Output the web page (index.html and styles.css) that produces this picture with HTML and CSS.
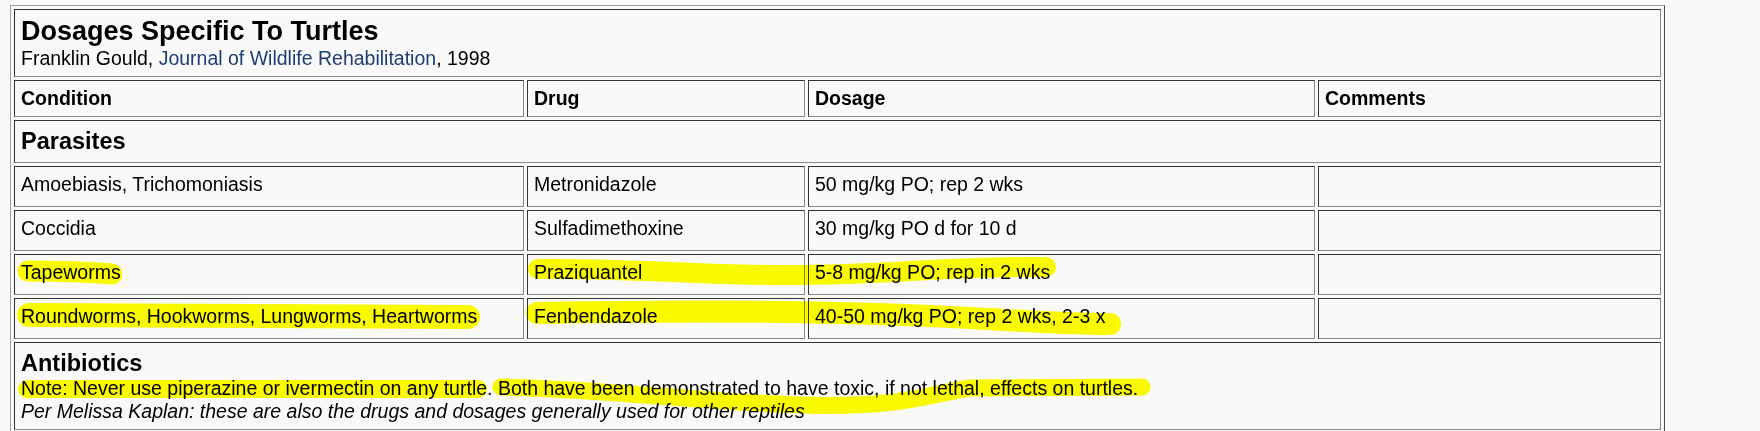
FILE: index.html
```html
<!DOCTYPE html>
<html>
<head>
<meta charset="utf-8">
<title>Dosages Specific To Turtles</title>
<link rel="stylesheet" href="styles.css">
</head>
<body>
<div class="page">
  <table class="dosage">
    <colgroup>
      <col class="c-cond">
      <col class="c-drug">
      <col class="c-dose">
      <col class="c-comm">
    </colgroup>
    <tr>
      <td colspan="4" class="title-cell">
        <div class="title">Dosages Specific To Turtles</div>
        <div class="source">Franklin Gould, <span class="journal">Journal of Wildlife Rehabilitation</span>, 1998</div>
      </td>
    </tr>
    <tr class="head">
      <th>Condition</th><th>Drug</th><th>Dosage</th><th>Comments</th>
    </tr>
    <tr class="section">
      <td colspan="4">Parasites</td>
    </tr>
    <tr class="data">
      <td>Amoebiasis, Trichomoniasis</td><td>Metronidazole</td><td>50 mg/kg PO; rep 2 wks</td><td></td>
    </tr>
    <tr class="data">
      <td>Coccidia</td><td>Sulfadimethoxine</td><td>30 mg/kg PO d for 10 d</td><td></td>
    </tr>
    <tr class="data">
      <td>Tapeworms</td><td>Praziquantel</td><td>5-8 mg/kg PO; rep in 2 wks</td><td></td>
    </tr>
    <tr class="data">
      <td>Roundworms, Hookworms, Lungworms, Heartworms</td><td>Fenbendazole</td><td>40-50 mg/kg PO; rep 2 wks, 2-3 x</td><td></td>
    </tr>
    <tr class="section notes">
      <td colspan="4">
        <div class="sec-title">Antibiotics</div>
        <div class="note">Note: Never use piperazine or ivermectin on any turtle. Both have been demonstrated to have toxic, if not lethal, effects on turtles.</div>
        <div class="kaplan">Per Melissa Kaplan: these are also the drugs and dosages generally used for other reptiles</div>
      </td>
    </tr>
  </table>
  <svg class="marker" width="1760" height="431" viewBox="0 0 1760 431" aria-hidden="true">
    <g fill="none" stroke="#ffff00" stroke-linecap="round" stroke-linejoin="round">
      <path d="M 28 271 C 60 271, 90 272, 112 274" stroke-width="21"/>
      <path d="M 538 269 C 640 268, 700 276, 800 275 S 950 266, 1046 267" stroke-width="20"/>
      <path d="M 29 315 C 200 315, 350 316, 468 317" stroke-width="24"/>
      <path d="M 537 313 C 700 310, 850 312, 950 317 S 1060 324, 1110 324" stroke-width="22"/>
      <path d="M 27 389 C 200 389, 350 389, 478 389" stroke-width="18"/>
      <path d="M 501 387 C 620 390, 700 402, 800 405 S 920 396, 970 388 L 1142 387" stroke-width="17"/>
    </g>
  </svg>
</div>
</body>
</html>
```

FILE: styles.css
```css
html, body {
  margin: 0;
  padding: 0;
}

body {
  background: #f9f9f9;
  font-family: "Liberation Sans", Arial, sans-serif;
  color: #000;
}

.page {
  position: relative;
  box-sizing: border-box;
  height: 431px;
  overflow: hidden;
  padding: 5px 0 0 10px;
}

.dosage {
  box-sizing: border-box;
  width: 1655px;
  table-layout: fixed;
  border-collapse: separate;
  border-spacing: 3px;
  border: 1px solid;
  border-color: #a0a0a0 #4a4a4a #4a4a4a #a0a0a0;
}

.c-cond { width: 510px; }
.c-drug { width: 278px; }
.c-dose { width: 507px; }

.dosage td,
.dosage th {
  border: 1px solid;
  border-color: #333 #888 #888 #333;
  padding: 6px 6px;
  font-size: 19.5px;
  line-height: 23px;
  text-align: left;
  vertical-align: middle;
  font-weight: normal;
}

.dosage th {
  font-weight: bold;
}

.title {
  font-size: 27px;
  line-height: 31px;
  font-weight: bold;
}

.source {
  font-size: 19.5px;
  line-height: 23px;
}

.journal {
  color: #1c3d72;
}

.section td {
  font-size: 23.5px;
  line-height: 29px;
  font-weight: bold;
  padding-top: 6px;
  padding-bottom: 6px;
}

.data td {
  padding-top: 6px;
  padding-bottom: 10px;
}

.notes td {
  font-weight: normal;
  font-size: 19.5px;
  line-height: 23px;
}

.sec-title {
  font-size: 23.5px;
  line-height: 28px;
  font-weight: bold;
}

.kaplan {
  font-style: italic;
}

.marker {
  position: absolute;
  left: 0;
  top: 0;
  pointer-events: none;
  mix-blend-mode: multiply;
}
```
